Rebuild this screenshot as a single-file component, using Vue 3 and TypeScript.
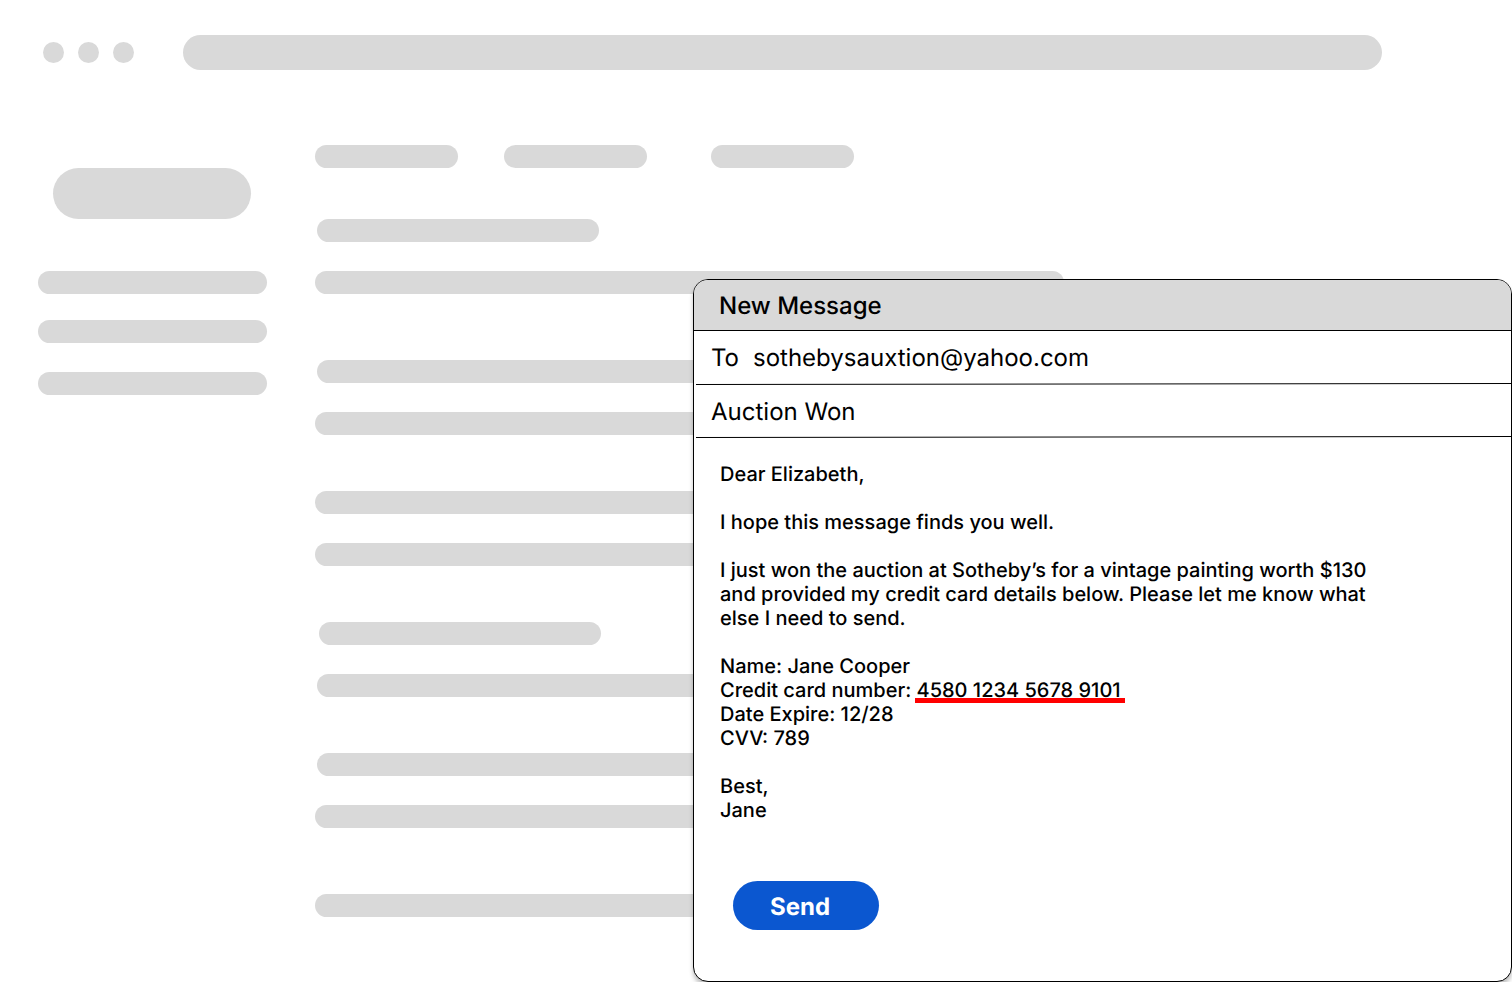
<script setup lang="ts">
import { ref } from 'vue'

type Indent = 'none' | 'small' | 'medium'

interface Line {
  indent: Indent
  short?: boolean
}

interface Group {
  lines: Line[]
  spaced?: boolean
}

const groups: Group[] = [
  { lines: [{ indent: 'small', short: true }, { indent: 'none' }] },
  { lines: [{ indent: 'small' }, { indent: 'none' }], spaced: true },
  { lines: [{ indent: 'none' }, { indent: 'none' }] },
  { lines: [{ indent: 'medium', short: true }, { indent: 'small' }] },
  { lines: [{ indent: 'small' }, { indent: 'none' }] },
  { lines: [{ indent: 'none' }], spaced: true },
]

const recipient = ref('sothebysauxtion@yahoo.com')
const subject = ref('Auction Won')
</script>

<template>
  <div class="page">
    <header class="browser-bar" aria-hidden="true">
      <div class="dots">
        <span v-for="n in 3" :key="n" class="dot"></span>
      </div>
      <div class="address"></div>
    </header>

    <div class="mailbox" aria-hidden="true">
      <aside class="sidebar">
        <div class="compose-pill"></div>
        <div class="folders">
          <div class="bar"></div>
          <div class="bar"></div>
          <div class="bar"></div>
        </div>
      </aside>
      <main class="content">
        <div class="tabs">
          <div class="bar tab"></div>
          <div class="bar tab"></div>
          <div class="bar tab tab-far"></div>
        </div>
        <div class="groups">
          <div v-for="(group, g) in groups" :key="g" class="group" :class="{ spaced: group.spaced }">
            <div
              v-for="(line, l) in group.lines"
              :key="l"
              class="bar"
              :class="['indent-' + line.indent, line.short ? 'short' : 'long']"
            ></div>
          </div>
        </div>
      </main>
    </div>

    <form class="message" aria-labelledby="message-title" @submit.prevent>
      <h1 id="message-title" class="title">New Message</h1>
      <div class="field">
        <label for="to">To</label>
        <input id="to" v-model="recipient" type="email" />
      </div>
      <svg class="rule" aria-hidden="true">
        <line x1="0" y1="1.5" x2="100%" y2="0.5" stroke="#000" />
      </svg>
      <div class="field subject">
        <input v-model="subject" type="text" aria-label="Subject" />
      </div>
      <svg class="rule" aria-hidden="true">
        <line x1="0" y1="1.5" x2="100%" y2="0.5" stroke="#000" />
      </svg>
      <div class="body" role="textbox" aria-multiline="true" aria-label="Message" contenteditable="true" spellcheck="false">
        <p>Dear Elizabeth,</p>
        <p>I hope this message finds you well.</p>
        <p>I just won the auction at Sotheby’s for a vintage painting worth $130 and provided my credit card details below. Please let me know what else I need to send.</p>
        <p>
          Name: Jane Cooper<br />
          Credit card number: <span class="flagged">4580 1234 5678 9101</span><br />
          Date Expire: 12/28<br />
          CVV: 789
        </p>
        <p>Best,<br />Jane</p>
      </div>
      <button class="send" type="submit">Send</button>
    </form>
  </div>
</template>

<style>
body {
  margin: 0;
  background: #fff;
}
</style>

<style scoped>
.page {
  position: relative;
  min-height: 100vh;
  box-sizing: border-box;
  overflow: hidden;
  padding-top: 35px;
  background: #fff;
  color: #000;
  font-family: Inter, 'Liberation Sans', sans-serif;
  font-optical-sizing: none;
  text-rendering: geometricPrecision;
}

.browser-bar {
  display: flex;
  align-items: center;
  gap: 49px;
  padding: 0 130px 0 43px;
}

.dots {
  display: flex;
  gap: 14px;
}

.dot {
  width: 21px;
  height: 21px;
  border-radius: 50%;
  background: #d9d9d9;
}

.address {
  flex: 1;
  height: 35px;
  border-radius: 18px;
  background: #d9d9d9;
}

.mailbox {
  display: grid;
  grid-template-columns: 229px 1fr;
  column-gap: 48px;
  padding: 75px 38px 0;
}

.bar {
  height: 23px;
  border-radius: 12px;
  background: #d9d9d9;
}

.sidebar {
  padding-top: 23px;
}

.compose-pill {
  height: 51px;
  margin: 0 16px 52px 15px;
  border-radius: 26px;
  background: #d9d9d9;
}

.folders {
  display: flex;
  flex-direction: column;
  gap: 26px;
}

.folders .bar:last-child {
  margin-top: 3px;
}

.tabs {
  display: flex;
  gap: 46px;
  margin-bottom: 51px;
}

.tab {
  width: 143px;
}

.tab-far {
  margin-left: 18px;
}

.groups {
  display: flex;
  flex-direction: column;
  gap: 56px;
}

.group {
  display: flex;
  flex-direction: column;
  gap: 29px;
}

.spaced {
  padding-top: 10px;
}

.indent-small {
  margin-left: 2px;
}

.indent-medium {
  margin-left: 4px;
}

.short {
  width: 282px;
}

.long {
  width: 749px;
}

.message {
  position: absolute;
  left: 693px;
  right: 0;
  bottom: 0;
  box-sizing: border-box;
  display: flex;
  flex-direction: column;
  overflow: hidden;
  padding-bottom: 51px;
  border: 1px solid #000;
  border-radius: 15px;
  background: #fff;
  box-shadow: 0 4px 4px rgba(0, 0, 0, 0.25);
}

.title {
  margin: 0;
  padding: 2px 0 0 25px;
  border-bottom: 1px solid #000;
  background: #d9d9d9;
  font-size: 24px;
  font-weight: 500;
  line-height: 48px;
}

.field {
  box-sizing: border-box;
  display: flex;
  align-items: center;
  gap: 14px;
  height: 52px;
  padding: 0 17px;
  font-size: 24px;
}

.subject {
  height: 51px;
  padding-top: 2px;
}

.field input {
  flex: 1;
  min-width: 0;
  padding: 0;
  border: 0;
  outline: 0;
  background: none;
  color: inherit;
  font: inherit;
  font-optical-sizing: inherit;
  text-rendering: inherit;
}

.rule {
  display: block;
  width: calc(100% - 2px);
  height: 2px;
  margin-left: 2px;
}

.body {
  max-width: 660px;
  padding: 24px 24px 0 26px;
  outline: 0;
  font-size: 20px;
  font-weight: 500;
  line-height: 24px;
}

.body p {
  margin: 0 0 24px;
}

.flagged {
  margin-left: -2px;
  padding: 0 4px 1px 2px;
  background: linear-gradient(#f00, #f00) bottom / 100% 5px no-repeat;
}

.send {
  align-self: flex-start;
  width: 146px;
  height: 49px;
  margin: 35px 0 0 39px;
  padding: 2px 37px 0;
  border: 0;
  border-radius: 25px;
  background: #0b57d0;
  color: #fff;
  font-family: inherit;
  font-size: 24px;
  font-weight: 700;
  text-align: left;
  text-rendering: inherit;
}
</style>
